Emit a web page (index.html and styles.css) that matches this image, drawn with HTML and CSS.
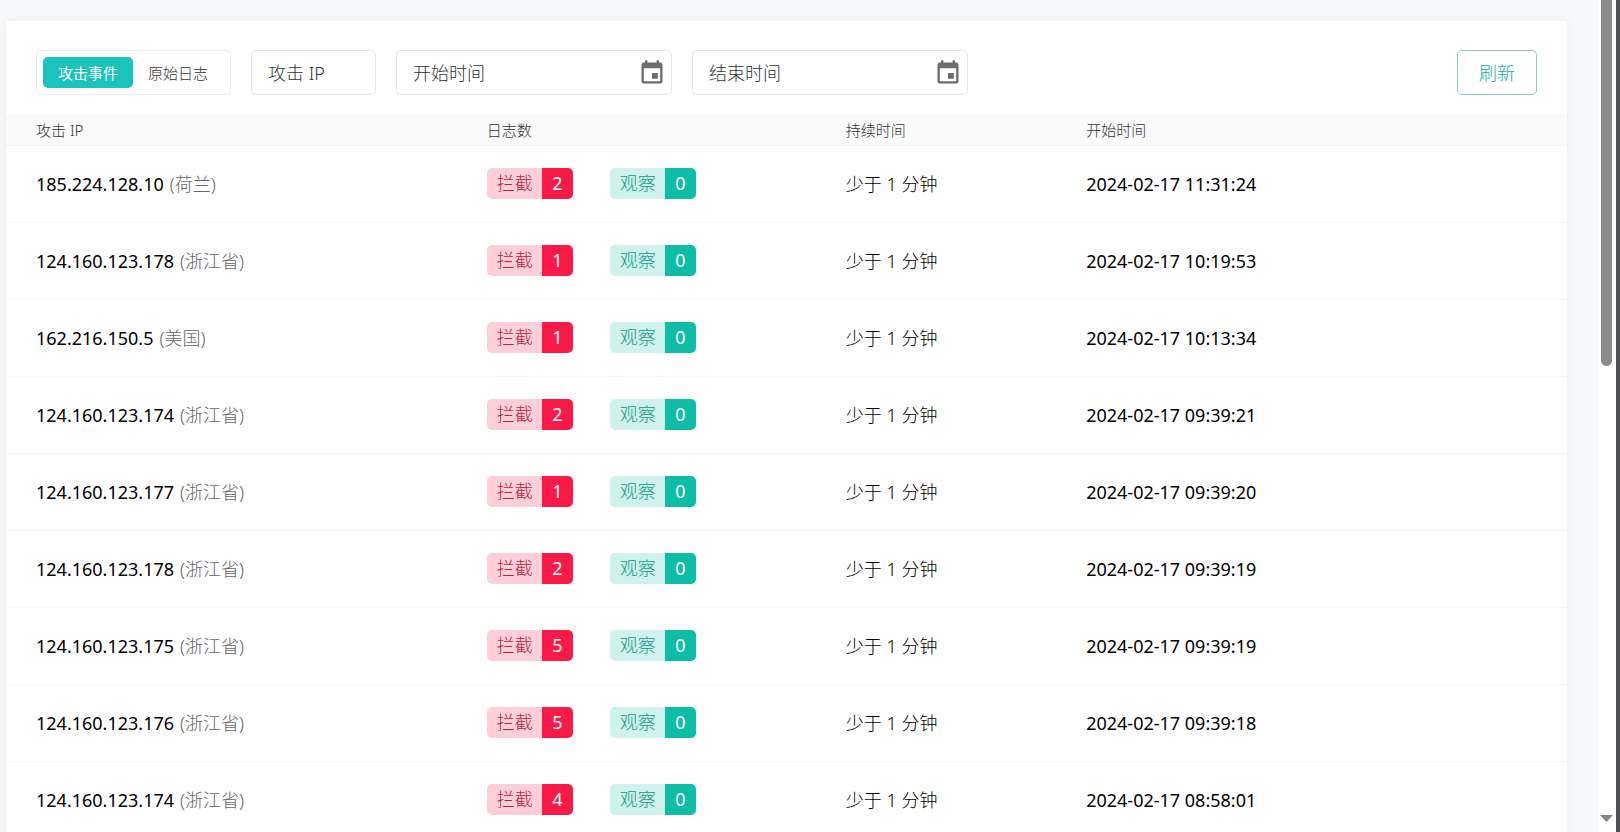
FILE: index.html
```
<!DOCTYPE html>
<html lang="zh-CN">
<head>
<meta charset="utf-8">
<title>攻击事件</title>
<link rel="stylesheet" href="styles.css">
</head>
<body>
<div class="app">
  <main class="page">
    <section class="card">
      <form class="toolbar">
        <div class="tabs">
          <button type="button" class="tab tab-active">攻击事件</button>
          <button type="button" class="tab">原始日志</button>
        </div>
        <input class="field field-ip" type="text" placeholder="攻击 IP" aria-label="攻击 IP">
        <div class="field date-field">
          <input class="date-input" type="text" placeholder="开始时间" aria-label="开始时间">
          <button type="button" class="icon-button" aria-label="选择开始时间">
            <svg class="icon" viewBox="0 0 24 24"><path d="M17 12h-5v5h5v-5zM16 1v2H8V1H6v2H5c-1.11 0-1.99.9-1.99 2L3 19c0 1.1.89 2 2 2h14c1.1 0 2-.9 2-2V5c0-1.1-.9-2-2-2h-1V1h-2zm3 18H5V8h14v11z"/></svg>
          </button>
        </div>
        <div class="field date-field">
          <input class="date-input" type="text" placeholder="结束时间" aria-label="结束时间">
          <button type="button" class="icon-button" aria-label="选择结束时间">
            <svg class="icon" viewBox="0 0 24 24"><path d="M17 12h-5v5h5v-5zM16 1v2H8V1H6v2H5c-1.11 0-1.99.9-1.99 2L3 19c0 1.1.89 2 2 2h14c1.1 0 2-.9 2-2V5c0-1.1-.9-2-2-2h-1V1h-2zm3 18H5V8h14v11z"/></svg>
          </button>
        </div>
        <button type="button" class="refresh">刷新</button>
      </form>
      <table class="events">
        <colgroup><col class="col-ip"><col class="col-logs"><col class="col-duration"><col></colgroup>
        <thead>
          <tr><th>攻击 IP</th><th>日志数</th><th>持续时间</th><th>开始时间</th></tr>
        </thead>
        <tbody>
          <tr><td>185.224.128.10<span class="region">(荷兰)</span></td><td><div class="badges"><span class="badge block"><span class="label">拦截</span><span class="count">2</span></span><span class="badge watch"><span class="label">观察</span><span class="count">0</span></span></div></td><td>少于 1 分钟</td><td>2024-02-17 11:31:24</td></tr>
          <tr><td>124.160.123.178<span class="region">(浙江省)</span></td><td><div class="badges"><span class="badge block"><span class="label">拦截</span><span class="count">1</span></span><span class="badge watch"><span class="label">观察</span><span class="count">0</span></span></div></td><td>少于 1 分钟</td><td>2024-02-17 10:19:53</td></tr>
          <tr><td>162.216.150.5<span class="region">(美国)</span></td><td><div class="badges"><span class="badge block"><span class="label">拦截</span><span class="count">1</span></span><span class="badge watch"><span class="label">观察</span><span class="count">0</span></span></div></td><td>少于 1 分钟</td><td>2024-02-17 10:13:34</td></tr>
          <tr><td>124.160.123.174<span class="region">(浙江省)</span></td><td><div class="badges"><span class="badge block"><span class="label">拦截</span><span class="count">2</span></span><span class="badge watch"><span class="label">观察</span><span class="count">0</span></span></div></td><td>少于 1 分钟</td><td>2024-02-17 09:39:21</td></tr>
          <tr><td>124.160.123.177<span class="region">(浙江省)</span></td><td><div class="badges"><span class="badge block"><span class="label">拦截</span><span class="count">1</span></span><span class="badge watch"><span class="label">观察</span><span class="count">0</span></span></div></td><td>少于 1 分钟</td><td>2024-02-17 09:39:20</td></tr>
          <tr><td>124.160.123.178<span class="region">(浙江省)</span></td><td><div class="badges"><span class="badge block"><span class="label">拦截</span><span class="count">2</span></span><span class="badge watch"><span class="label">观察</span><span class="count">0</span></span></div></td><td>少于 1 分钟</td><td>2024-02-17 09:39:19</td></tr>
          <tr><td>124.160.123.175<span class="region">(浙江省)</span></td><td><div class="badges"><span class="badge block"><span class="label">拦截</span><span class="count">5</span></span><span class="badge watch"><span class="label">观察</span><span class="count">0</span></span></div></td><td>少于 1 分钟</td><td>2024-02-17 09:39:19</td></tr>
          <tr><td>124.160.123.176<span class="region">(浙江省)</span></td><td><div class="badges"><span class="badge block"><span class="label">拦截</span><span class="count">5</span></span><span class="badge watch"><span class="label">观察</span><span class="count">0</span></span></div></td><td>少于 1 分钟</td><td>2024-02-17 09:39:18</td></tr>
          <tr><td>124.160.123.174<span class="region">(浙江省)</span></td><td><div class="badges"><span class="badge block"><span class="label">拦截</span><span class="count">4</span></span><span class="badge watch"><span class="label">观察</span><span class="count">0</span></span></div></td><td>少于 1 分钟</td><td>2024-02-17 08:58:01</td></tr>
        </tbody>
      </table>
    </section>
  </main>
  <div class="scrollbar" aria-hidden="true">
    <div class="thumb"></div>
    <svg class="arrow" viewBox="0 0 13 7"><path d="M0 0h13L6.500 7z"/></svg>
  </div>
</div>
</body>
</html>
```
FILE: styles.css
```
* {
  box-sizing: border-box;
}

body {
  margin: 0;
  background: #fff;
  color: #000;
  font-family: "Noto Sans", "Noto Sans CJK SC", sans-serif;
  font-size: 18px;
  font-weight: 300;
}

button,
input {
  font: inherit;
}

.app {
  display: flex;
  height: 100vh;
  overflow: hidden;
  border-right: 4px solid #4b5154;
}

.page {
  flex: 1;
  min-width: 0;
  padding: 21px 31px 0 6px;
  background: #f7f8fa;
}

.card {
  min-height: 100%;
  background: #fff;
  box-shadow: 0 0 10px rgba(0, 0, 0, 0.05);
}

.toolbar {
  display: flex;
  gap: 20px;
  padding: 29px 30px 20px;
}

.tabs {
  display: flex;
  padding: 6px 7px 6px 6px;
  border: 1px solid #ebecec;
  border-radius: 5px;
}

.tab {
  height: 31px;
  padding: 0 15px;
  border: 0;
  border-radius: 5px;
  background: none;
  color: #333;
  font-size: 15px;
  line-height: 24px;
}

.tab-active {
  background: #1ac4bc;
  color: #fff;
  font-weight: 400;
}

.field {
  height: 45px;
  border: 1px solid #e4e6e6;
  border-radius: 5px;
  background: #fff;
}

.field-ip {
  width: 125px;
  padding: 0 16px;
}

.date-field {
  display: flex;
  align-items: center;
  width: 276px;
  padding: 0 5px 0 16px;
}

.date-input {
  flex: 1;
  min-width: 0;
  padding: 0;
  border: 0;
  background: none;
}

::placeholder {
  color: #333;
  opacity: 1;
}

.icon-button {
  display: flex;
  padding: 0;
  border: 0;
  background: none;
}

.icon {
  width: 28px;
  height: 28px;
  fill: #6b6b6b;
}

.refresh {
  width: 80px;
  height: 45px;
  margin-left: auto;
  padding: 0 0 2px;
  border: 1px solid #8fc9c5;
  border-radius: 5px;
  background: #fff;
  color: #14b0a2;
}

.events {
  width: 100%;
  table-layout: fixed;
  border-collapse: collapse;
}

.col-ip {
  width: 30.8%;
}

.col-logs {
  width: 23%;
}

.col-duration {
  width: 15.4%;
}

.events th,
.events td {
  padding: 0;
  border-bottom: 1px solid #f4f5f5;
  text-align: left;
  white-space: nowrap;
}

.events th:first-child,
.events td:first-child {
  padding-left: 30px;
}

.events th {
  height: 30px;
  background: #fafafb;
  color: #333;
  font-size: 15px;
  font-weight: 300;
  line-height: 20px;
}

.events td {
  height: 77px;
  line-height: 30px;
}

.events td:first-child,
.events td:last-child {
  font-weight: 400;
}

.region {
  margin-left: 6px;
  color: #666;
  font-weight: 300;
}

.badges {
  display: flex;
  gap: 37px;
}

.badge {
  display: flex;
  height: 31px;
  border-radius: 5px;
  overflow: hidden;
}

.label {
  padding: 0 9px 0 10px;
}

.count {
  width: 31px;
  color: #fff;
  font-weight: 400;
  text-align: center;
}

.block .label {
  background: #fdd0d9;
  color: #b81e40;
}

.block .count {
  background: #fa1a48;
}

.watch .label {
  background: #cff3ec;
  color: #12998a;
}

.watch .count {
  background: #0dbda6;
}

.scrollbar {
  display: flex;
  flex-direction: column;
  justify-content: space-between;
  align-items: center;
  width: 18px;
  padding: 0 3px 10px 2px;
  background: #fff;
}

.thumb {
  width: 11px;
  height: 44vh;
  border-radius: 0 0 6px 6px;
  background: #8a8c8b;
}

.arrow {
  width: 13px;
  height: 7px;
  fill: #858585;
}
```
